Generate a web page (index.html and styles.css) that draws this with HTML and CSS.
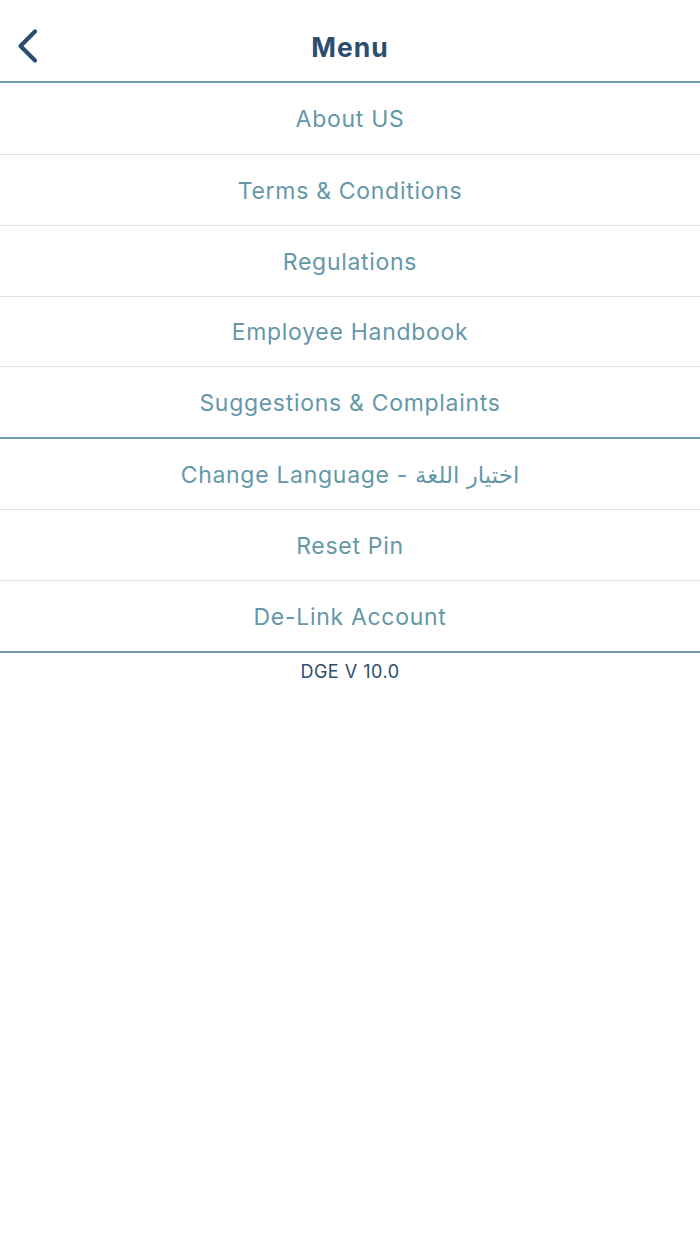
FILE: index.html
```html
<!DOCTYPE html>
<html>
<head>
<meta charset="utf-8">
<link rel="stylesheet" href="styles.css">
</head>
<body>
<div class="app">
  <header class="topbar">
    <button class="back" aria-label="Back">
      <svg width="26" height="36" viewBox="0 0 26 36"><path d="M21 3.5 L6.5 18 L21 32.5" fill="none" stroke="#2c4d6d" stroke-width="4.2" stroke-linecap="round" stroke-linejoin="round"/></svg>
    </button>
    <h1 class="title">Menu</h1>
  </header>
  <ul class="group">
    <li class="item first">About US</li>
    <li class="item">Terms &amp; Conditions</li>
    <li class="item">Regulations</li>
    <li class="item short">Employee Handbook</li>
    <li class="item">Suggestions &amp; Complaints</li>
  </ul>
  <ul class="group">
    <li class="item">Change Language - <span dir="rtl">اختيار اللغة</span></li>
    <li class="item">Reset Pin</li>
    <li class="item">De-Link Account</li>
  </ul>
  <div class="version">DGE V 10.0</div>
</div>
</body>
</html>
```
FILE: styles.css
```css
html, body {
  margin: 0;
  padding: 0;
  background: #ffffff;
}
body {
  font-family: Inter, "DejaVu Sans", sans-serif;
}
.app {
  width: 700px;
}
.topbar {
  height: 81px;
  display: flex;
  align-items: center;
  justify-content: center;
  position: relative;
  border-bottom: 2px solid #6f9dae;
}
.back {
  position: absolute;
  left: 14px;
  top: 28px;
  border: 0;
  background: none;
  padding: 0;
  width: 26px;
  height: 36px;
}
.title {
  margin: 12px 0 0;
  font-size: 26.5px;
  font-weight: 700;
  color: #2c4d6d;
  letter-spacing: 1px;
}
.group {
  list-style: none;
  margin: 0;
  padding: 0;
  border-bottom: 2px solid #6f9dae;
}
.item {
  box-sizing: border-box;
  height: 71px;
  padding-top: 1px;
  display: flex;
  align-items: center;
  justify-content: center;
  font-size: 23px;
  color: #6498a9;
  border-bottom: 1px solid #e2e2e2;
  letter-spacing: 0.7px;
}
.item.first {
  height: 72px;
}
.item.short {
  height: 70px;
}
.item span {
  margin-left: 0.3em;
  font-family: "DejaVu Sans", sans-serif;
  font-size: 23px;
  letter-spacing: 0;
}
.item:last-child {
  border-bottom: 0;
  height: 70px;
}
.version {
  text-align: center;
  font-size: 18px;
  color: #2c4d6d;
  margin-top: 8px;
  letter-spacing: 0.5px;
}
```
